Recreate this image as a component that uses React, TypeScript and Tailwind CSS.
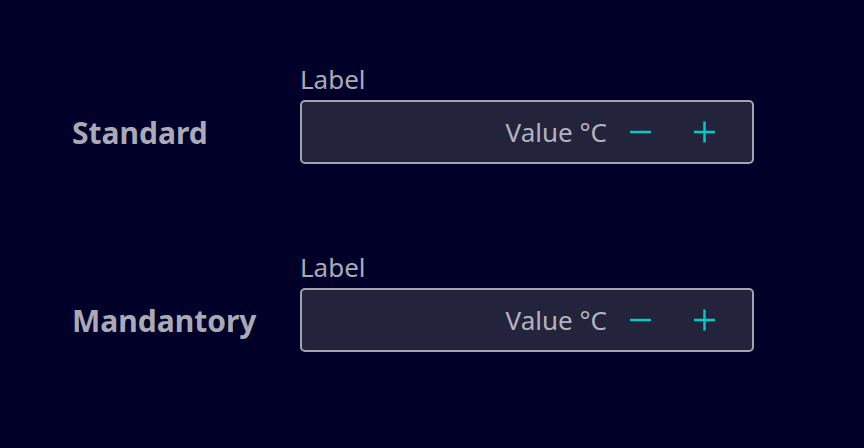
export default function App() {
  const rows = ["Standard", "Mandantory"];
  return (
    <div
      className="h-[448px] w-[864px] bg-[#000028] pt-[63px] pl-[72px]"
      style={{ fontFamily: '"Noto Sans", sans-serif' }}
    >
      <div className="flex flex-col gap-[87px]">
        {rows.map((name) => (
          <div key={name} className="flex">
            <div className="w-[228px] pt-[52px] text-[30px] font-bold leading-[36px] text-[#a9a9b8]">{name}</div>
            <div className="flex flex-col">
              <div className="h-[37px] text-[26px] leading-[32px] text-[#a9a9b8]">Label</div>
              <div className="flex h-[64px] w-[454px] items-center justify-end rounded-[5px] border-2 border-[#a3a3b0] bg-[#23233c] pr-[34px]">
                <span className="text-[26px] leading-[32px] text-[#b3b3c0]">Value °C</span>
                <svg className="ml-[21px]" width="26" height="26" viewBox="0 0 26 26">
                  <path d="M2 13h21" stroke="#00cccc" strokeWidth="2.4" />
                </svg>
                <svg className="ml-[38px]" width="26" height="26" viewBox="0 0 26 26">
                  <path d="M2 13h21M12.5 2.5v21" stroke="#00cccc" strokeWidth="2.4" />
                </svg>
              </div>
            </div>
          </div>
        ))}
      </div>
    </div>
  );
}
